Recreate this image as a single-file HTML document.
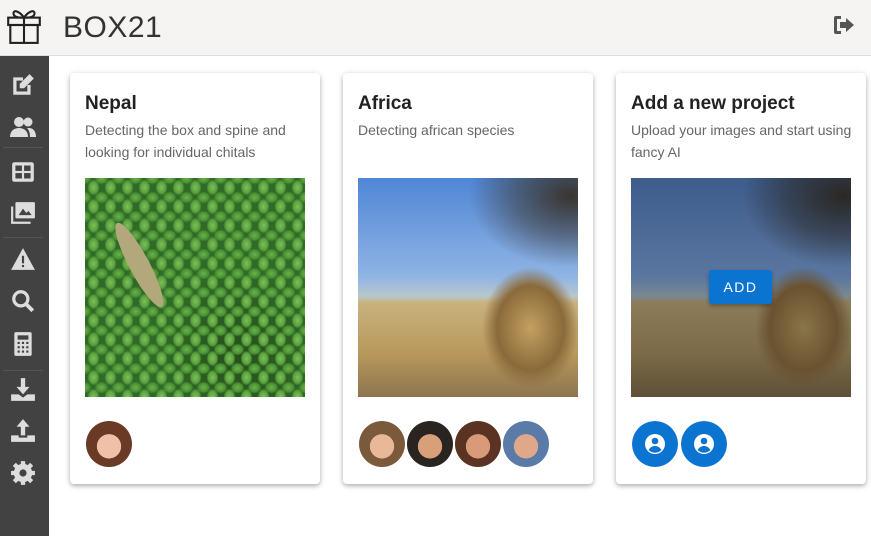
<!DOCTYPE html>
<html><head><meta charset="utf-8"><style>
*{box-sizing:border-box;margin:0;padding:0}
body{width:871px;height:536px;overflow:hidden;background:#fff;font-family:"Liberation Sans",sans-serif;position:relative}
.hdr{position:absolute;left:0;top:0;width:871px;height:56px;background:#f5f4f2;border-bottom:1px solid #ddd}
.hdr .t{position:absolute;left:63px;top:11px;font-size:30px;color:#333;letter-spacing:.5px}
.side{position:absolute;left:0;top:56px;width:49px;height:480px;background:#424242}
.ic{position:absolute;left:10px;width:26px;height:26px}
.sep{position:absolute;left:3px;width:40px;height:1px;background:#555}
.card{position:absolute;top:73px;width:250px;height:411px;background:#fff;border-radius:4px;box-shadow:0 2px 4px rgba(0,0,0,.25),0 1px 8px rgba(0,0,0,.1)}
.card h2{position:absolute;left:15px;top:20px;font-size:19px;font-weight:bold;color:#222}
.card p{position:absolute;left:15px;top:47px;width:225px;font-size:14px;line-height:21.5px;color:#666}
.img{position:absolute;left:15px;top:105px;width:220px;height:219px;overflow:hidden}
.av{position:absolute;top:348px;width:46px;height:46px;border-radius:50%}
</style></head><body>
<div class="hdr">
<svg style="position:absolute;left:6px;top:5px" width="36" height="40" viewBox="0 0 34 38" fill="none" stroke="#222" stroke-width="2"><rect x="2" y="12" width="30" height="7"/><rect x="4" y="19" width="26" height="17"/><line x1="17" y1="12" x2="17" y2="36"/><path d="M17 12c-4-6-10-8-10-4s6 4 10 4c4 0 10 0 10-4s-6-2-10 4z"/></svg>
<div class="t">BOX21</div>
<svg style="position:absolute;left:832px;top:14px" width="24" height="22" viewBox="0 0 24 22"><path d="M9 2H4a2 2 0 0 0-2 2v14a2 2 0 0 0 2 2h5v-3H5V5h4z" fill="#555"/><path d="M14 4l8 7-8 7v-4H8V8h6z" fill="#555"/></svg>
</div>
<div class="side">
<svg class="ic" style="top:16px" viewBox="0 0 24 24"><path d="M3 5h9v3H6v10h10v-6h3v9H3z" fill="#ddd"/><path d="M18 2l4 4-9 9H9v-4z" fill="#ddd"/></svg>
<svg class="ic" style="top:58px" viewBox="0 0 26 24"><circle cx="9" cy="7" r="5" fill="#ddd"/><circle cx="18" cy="7" r="4.5" fill="#ddd"/><path d="M0 22c0-6 4-9 9-9s9 3 9 9z" fill="#ddd"/><path d="M19 13c4 0 7 3 7 9h-6c0-4-1-7-3-9z" fill="#ddd"/></svg>
<div class="sep" style="top:91px"></div>
<svg class="ic" style="top:103px" viewBox="0 0 24 24"><rect x="2" y="3" width="20" height="18" rx="2" fill="#ddd"/><rect x="5" y="6" width="6" height="5" fill="#424242"/><rect x="13" y="6" width="6" height="5" fill="#424242"/><rect x="5" y="13" width="6" height="5" fill="#424242"/><rect x="13" y="13" width="6" height="5" fill="#424242"/></svg>
<svg class="ic" style="top:144px" viewBox="0 0 24 24"><rect x="5" y="2" width="18" height="15" rx="1" fill="#ddd"/><path d="M8 14l4-6 3 4 2-2 3 4z" fill="#424242"/><path d="M1 6h2v14h16v2H1z" fill="#ddd"/></svg>
<div class="sep" style="top:181px"></div>
<svg class="ic" style="top:190px" viewBox="0 0 24 24"><path d="M12 2L1 22h22z" fill="#ddd"/><rect x="11" y="9" width="2" height="7" fill="#424242"/><rect x="11" y="17.5" width="2" height="2" fill="#424242"/></svg>
<svg class="ic" style="top:232px" viewBox="0 0 24 24"><circle cx="10" cy="10" r="6.5" stroke="#ddd" stroke-width="3" fill="none"/><path d="M15 15l6 6" stroke="#ddd" stroke-width="3.5"/></svg>
<svg class="ic" style="top:275px" viewBox="0 0 24 24"><rect x="4" y="1" width="16" height="22" rx="1.5" fill="#ddd"/><rect x="7" y="4" width="10" height="4" fill="#424242"/><g fill="#424242"><rect x="7" y="10" width="2" height="2"/><rect x="11" y="10" width="2" height="2"/><rect x="15" y="10" width="2" height="2"/><rect x="7" y="14" width="2" height="2"/><rect x="11" y="14" width="2" height="2"/><rect x="15" y="14" width="2" height="2"/><rect x="7" y="18" width="2" height="2"/><rect x="11" y="18" width="2" height="2"/><rect x="15" y="18" width="2" height="2"/></g></svg>
<div class="sep" style="top:314px"></div>
<svg class="ic" style="top:320px" viewBox="0 0 24 24"><path d="M10 2h4v8h4l-6 7-6-7h4z" fill="#ddd"/><path d="M1 17h7l4 3 4-3h7v6H1z" fill="#ddd"/></svg>
<svg class="ic" style="top:361px" viewBox="0 0 24 24"><path d="M12 2l6 7h-4v8h-4V9H6z" fill="#ddd"/><path d="M1 17h7v2h8v-2h7v6H1z" fill="#ddd"/></svg>
<svg class="ic" style="top:404px" viewBox="0 0 24 24"><circle cx="12" cy="12" r="8.5" fill="#ddd"/><g stroke="#ddd" stroke-width="4"><path d="M12 1v22M1 12h22M4 4l16 16M20 4L4 20"/></g><circle cx="12" cy="12" r="3.3" fill="#424242"/></svg>
</div>

<div class="card" style="left:70px"><h2>Nepal</h2><p>Detecting the box and spine and looking for individual chitals</p>
<div class="img" style="background:radial-gradient(ellipse 6px 8px at 50% 50%,#7cc05a 0,#5aa03e 70%,transparent 100%) 0 0/17px 19px,radial-gradient(ellipse 7px 6px at 50% 50%,#6ab24c 0,#4a9034 70%,transparent 100%) 8px 10px/17px 19px,radial-gradient(circle at 70% 80%,rgba(30,60,20,.6) 0,transparent 35%),#2f6a26">
<div style="position:absolute;left:22px;top:45px;width:20px;height:95px;background:#b3a87c;border-radius:50%;transform:rotate(-28deg);transform-origin:top"></div></div>
<div class="av" style="left:16px;background:radial-gradient(circle at 50% 55%,#f0c0a8 0 35%,#6b3a26 36%)"></div></div>

<div class="card" style="left:343px"><h2>Africa</h2><p>Detecting african species</p>
<div class="img" style="background:linear-gradient(#4f86d6 0,#8fb4e4 45%,#b8c7cc 54%,#c9b27e 57%,#b8985c 80%,#8e7550 100%)">
<div style="position:absolute;left:110px;top:0;width:120px;height:90px;background:radial-gradient(ellipse at 85% 20%,#3a3530 0,rgba(60,55,50,.5) 40%,transparent 70%)"></div>
<div style="position:absolute;left:125px;top:90px;width:95px;height:120px;background:radial-gradient(ellipse,#c4a060 0,#8a6a3a 50%,transparent 72%)"></div></div>
<div class="av" style="left:16px;background:radial-gradient(circle at 50% 55%,#e8b898 0 35%,#7a5a3a 36%)"></div>
<div class="av" style="left:64px;background:radial-gradient(circle at 50% 55%,#d8a078 0 35%,#2a2420 36%)"></div>
<div class="av" style="left:112px;background:radial-gradient(circle at 50% 55%,#d89a78 0 35%,#5a3322 36%)"></div>
<div class="av" style="left:160px;background:radial-gradient(circle at 50% 55%,#e0a888 0 35%,#5a7aa8 36%)"></div></div>

<div class="card" style="left:616px"><h2>Add a new project</h2><p>Upload your images and start using fancy AI</p>
<div class="img" style="background:linear-gradient(#3d5c8c 0,#5a76a0 45%,#7a8890 54%,#8c7c5a 57%,#7c6a48 80%,#5e5038 100%)">
<div style="position:absolute;left:110px;top:0;width:120px;height:90px;background:radial-gradient(ellipse at 85% 20%,#2a2824 0,rgba(40,38,34,.5) 40%,transparent 70%)"></div>
<div style="position:absolute;left:125px;top:90px;width:95px;height:120px;background:radial-gradient(ellipse,#8a7448 0,#6a5230 50%,transparent 72%)"></div>
<div style="position:absolute;left:78px;top:92px;width:63px;height:34px;background:#0a74d0;border-radius:3px;color:#fff;font-size:14px;letter-spacing:1.5px;text-align:center;line-height:34px;box-shadow:0 2px 4px rgba(0,0,0,.3)">ADD</div></div>
<svg class="av" style="left:16px" viewBox="0 0 46 46"><circle cx="23" cy="23" r="23" fill="#0a74d0"/><circle cx="23" cy="23" r="10" fill="#fff"/><circle cx="23" cy="20" r="3.3" fill="#0a74d0"/><path d="M16.5 29c2-3 4-4 6.5-4s4.5 1 6.5 4a9 9 0 0 1-13 0z" fill="#0a74d0"/></svg>
<svg class="av" style="left:65px" viewBox="0 0 46 46"><circle cx="23" cy="23" r="23" fill="#0a74d0"/><circle cx="23" cy="23" r="10" fill="#fff"/><circle cx="23" cy="20" r="3.3" fill="#0a74d0"/><path d="M16.5 29c2-3 4-4 6.5-4s4.5 1 6.5 4a9 9 0 0 1-13 0z" fill="#0a74d0"/></svg>
</div>
</body></html>
